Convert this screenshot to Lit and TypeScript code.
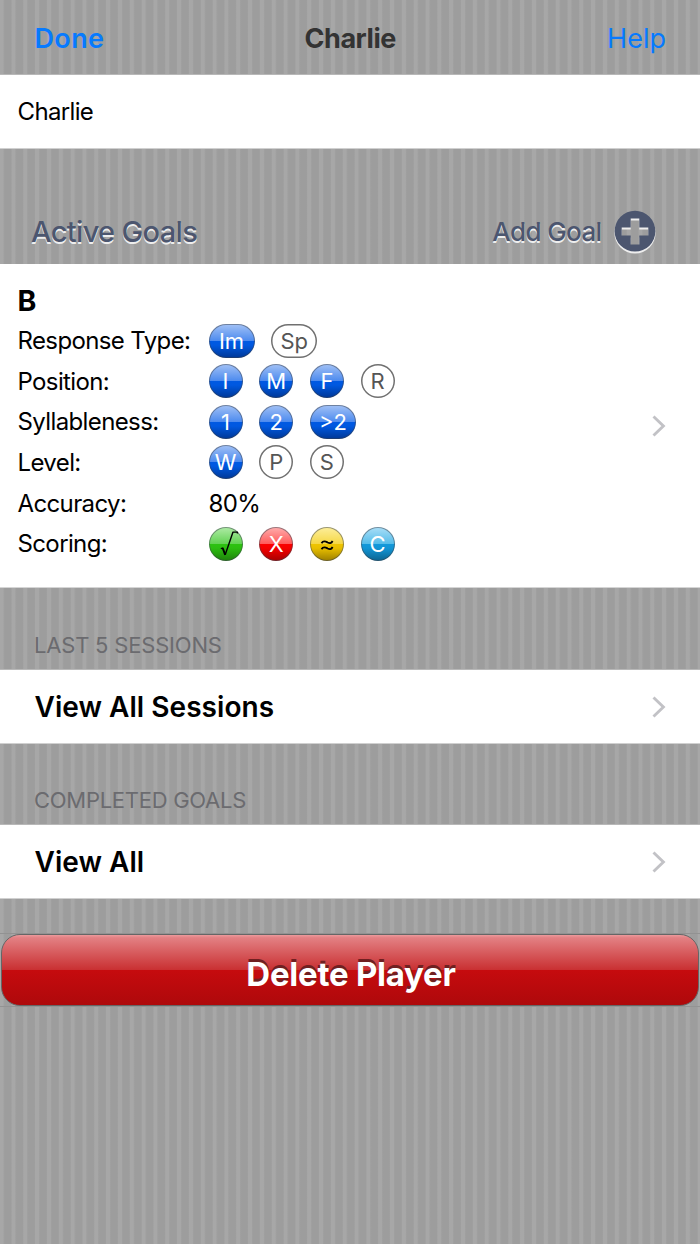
import { LitElement, html, css } from "lit";
import { customElement, property } from "lit/decorators.js";

@customElement("goal-pill")
class GoalPill extends LitElement {
  @property() tone = "off";
  @property() label = "";
  @property({ type: Boolean }) wide = false;
  static styles = css`
    :host { display: block; }
    .pill {
      box-sizing: border-box; width: 34px; height: 34px; border-radius: 17px;
      display: flex; align-items: center; justify-content: center;
      font-size: 22px; line-height: 30px; color: #fff; padding-top: 0;
      border: 1.5px solid rgba(60, 65, 75, 0.5); background-origin: border-box;
    }
    .wide { width: 46px; }
    .off { color: #555; border: 0; box-shadow: inset 0 0 0 1.5px #707070; background: #fff; }
    .blue { background-image: linear-gradient(#a3c2f6, #4c8aee 50%, #0059e2 50%, #0058e0 62%, #003795); }
    .green { background-image: linear-gradient(#b0eba8, #62d252 50%, #2dc211 50%, #2cbd10 62%, #1e800b); }
    .red { background-image: linear-gradient(#ffaeae, #ff5a5a 50%, #fa0000 50%, #f40000 62%, #a80000); }
    .yellow { background-image: linear-gradient(#fdef9d, #f5d744 50%, #efc400 50%, #e9bf00 62%, #9b7e00); color: #000; }
    .cyan { background-image: linear-gradient(#abdff8, #54bce9 50%, #1398da 50%, #1295d5 62%, #0b638f); }
    svg { display: block; width: 34px; height: 34px; flex: none; }
  `;
  render() {
    const mark = this.label === "√"
      ? html`<svg viewBox="0 0 34 34" fill="none" stroke="#000" stroke-linejoin="round">
          <path d="M11.8 21.8l2-1.1" stroke-width="1.1" /><path d="M13.6 20.8l2.6 7.1" stroke-width="1.9" /><path d="M16.2 27.8L24 5.1h4.4v1.4" stroke-width="1.4" /></svg>`
      : this.label === "≈"
        ? html`<svg viewBox="0 0 34 34" fill="none" stroke="#000" stroke-width="1.8">
          <path d="M11.5 16.2c2-3.3 4.3-1.8 6.2-.7 1.9 1 3.7.9 4.9-1.5M11.5 22.2c2-3.3 4.3-1.8 6.2-.7 1.9 1 3.7.9 4.9-1.5" /></svg>`
        : this.label;
    return html`<div class="pill ${this.tone} ${this.wide ? "wide" : ""}">${mark}</div>`;
  }
}

type Pill = [string, string, boolean?];
const rows: { name: string; pills?: Pill[]; text?: string }[] = [
  { name: "Response Type:", pills: [["Im", "blue", true], ["Sp", "off", true]] },
  { name: "Position:", pills: [["I", "blue"], ["M", "blue"], ["F", "blue"], ["R", "off"]] },
  { name: "Syllableness:", pills: [["1", "blue"], ["2", "blue"], [">2", "blue", true]] },
  { name: "Level:", pills: [["W", "blue"], ["P", "off"], ["S", "off"]] },
  { name: "Accuracy:", text: "80%" },
  { name: "Scoring:", pills: [["√", "green"], ["X", "red"], ["≈", "yellow"], ["C", "cyan"]] },
];

const chevron = html`<svg class="chevron" viewBox="0 0 14 22" fill="none" stroke="#c2c2c6" stroke-width="2.9">
  <path d="M1.5 1.5L11.4 11 1.5 20.5" /></svg>`;

@customElement("app-root")
class AppRoot extends LitElement {
  static styles = css`
    :host {
      display: flex; flex-direction: column; height: 1244px; width: 700px; overflow: hidden;
      font-family: Inter, "Liberation Sans", sans-serif; color: #000;
      background: repeating-linear-gradient(90deg, #a7a7a7 0 3.2px, #a0a0a0 3.8px, #9d9d9d 5px 10.6px, #a0a0a0 11.4px, #a7a7a7 11.83px);
    }
    * { box-sizing: border-box; white-space: nowrap; }
    .nav { height: 75px; display: grid; grid-template-columns: 1fr auto 1fr; align-items: center; padding: 2px 34px 0 34.5px; font-size: 27px; border-bottom: 1px solid #b8b8b8; }
    .done { color: #067aff; font-weight: 600; letter-spacing: 0.35px; }
    .title { color: #333; font-weight: 700; letter-spacing: -0.45px; }
    .help { color: #067aff; text-align: right; letter-spacing: 0; }
    .name { height: 74px; background: #fff; display: flex; align-items: center; padding-left: 17.5px; font-size: 24px; letter-spacing: -0.65px; border-bottom: 1px solid #d0d0d0; }
    .goals-head { height: 115px; display: flex; align-items: flex-end; padding: 0 43px 10px 31px; color: #4c566f; font-weight: 500; }
    .goals-head span { line-height: 44px; text-shadow: 0 2px 0 #eee; }
    .active { font-size: 29px; flex: 1; letter-spacing: -0.65px; }
    .add { font-size: 26px; margin-right: 12.5px; letter-spacing: -0.6px; }
    .plus { width: 43px; height: 46px; display: block; margin-bottom: -2px; }
    .goal { height: 324px; background: #fff; display: flex; align-items: center; border-bottom: 1px solid #d5d5d5; }
    .details { flex: 1; padding: 0 0 3.6px 17.5px; }
    .goal h2 { margin: 0 0 3px; font-size: 28.5px; line-height: 34px; font-weight: 700; }
    .row { height: 40.55px; display: grid; grid-template-columns: 191px 1fr; align-items: center; font-size: 24px; letter-spacing: -0.62px; }
    .pct { letter-spacing: -0.6px; }
    .pills { display: flex; gap: 16.7px; letter-spacing: 0; }
    .chevron { width: 14px; height: 22px; margin-right: 34px; display: block; }
    .section { height: 82px; padding: 43px 0 0 34px; font-size: 22px; line-height: 28px; color: #6b6b6f; border-bottom: 1px solid #b8b8b8; letter-spacing: -0.2px; }
    .completed { height: 81px; padding-top: 42px; letter-spacing: -0.28px; }
    .link { background: #fff; height: 74px; display: flex; align-items: center; justify-content: space-between; padding: 1px 0 0 34.5px; font-size: 28px; font-weight: 600; border-bottom: 1px solid #d0d0d0; letter-spacing: 0.04px; }
    .delete-wrap { margin-top: 34px; height: 74px; border-top: 1px solid #929292; border-bottom: 1px solid #939393; }
    .delete {
      display: block; width: 698px; height: 72px; margin: 0 0 0 1px; padding: 8px 0 0 2px;
      border: 1px solid #666; border-radius: 19px; color: #fff; font: 700 33px/1 Inter, sans-serif; letter-spacing: -0.25px;
      background: linear-gradient(#ed9a9c 0, #e38083 4%, #c93032 50%, #c60b0e 50%, #ae090b 100%);
      text-shadow: 0 -3px 0 #702021;
    }
  `;
  render() {
    return html`
      <div class="nav"><span class="done">Done</span><span class="title">Charlie</span><span class="help">Help</span></div>
      <div class="name"><span>Charlie</span></div>
      <div class="goals-head">
        <span class="active">Active Goals</span><span class="add">Add Goal</span>
        <svg class="plus" viewBox="0 0 43 46">
          <path fill="#eee" fill-rule="evenodd" d="M21 2.3a20.6 20.6 0 1 1 0 41.2 20.6 20.6 0 0 1 0-41.2zM16.7 10.4h8.6v9h9v8h-9v9h-8.6v-9h-9v-8h9z" />
          <path fill="#4c566f" fill-rule="evenodd" d="M21 .8a20.4 20.4 0 1 1 0 40.8 20.4 20.4 0 0 1 0-40.8zM16.7 8.6h8.6v9h9v8h-9v9h-8.6v-9h-9v-8h9z" />
        </svg>
      </div>
      <div class="goal">
        <div class="details">
          <h2>B</h2>
          ${rows.map((r) => html`<div class="row"><span>${r.name}</span>${r.pills
            ? html`<div class="pills">${r.pills.map((p) => html`<goal-pill .label=${p[0]} .tone=${p[1]} .wide=${!!p[2]}></goal-pill>`)}</div>`
            : html`<span class="pct">${r.text}</span>`}</div>`)}
        </div>
        ${chevron}
      </div>
      <div class="section">LAST 5 SESSIONS</div>
      <div class="link"><span>View All Sessions</span>${chevron}</div>
      <div class="section completed">COMPLETED GOALS</div>
      <div class="link"><span>View All</span>${chevron}</div>
      <div class="delete-wrap"><button class="delete">Delete Player</button></div>
    `;
  }
}
